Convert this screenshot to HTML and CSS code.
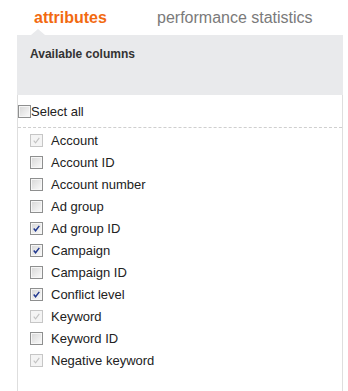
FILE: index.html
```html
<!DOCTYPE html>
<html lang="en">
<head>
  <meta charset="UTF-8" />
  <title>Columns</title>
  <link rel="stylesheet" href="styles.css">
</head>
<body>
  <div class="tabs">
    <span class="tab active">attributes</span>
    <span class="tab">performance statistics</span>
  </div>
  <div class="panel">
    <div class="panel-head">Available columns</div>
    <div class="panel-body">
      <label class="select-all"><span class="cb"></span>Select all</label>
      <ul class="col-list">
        <li><span class="cb checked disabled"><svg viewBox="0 0 13 13"><path d="M3.2 6.6 L5.4 9.2 L9.8 3.4"/></svg></span>Account</li>
        <li><span class="cb"></span>Account ID</li>
        <li><span class="cb"></span>Account number</li>
        <li><span class="cb"></span>Ad group</li>
        <li><span class="cb checked"><svg viewBox="0 0 13 13"><path d="M3.2 6.6 L5.4 9.2 L9.8 3.4"/></svg></span>Ad group ID</li>
        <li><span class="cb checked"><svg viewBox="0 0 13 13"><path d="M3.2 6.6 L5.4 9.2 L9.8 3.4"/></svg></span>Campaign</li>
        <li><span class="cb"></span>Campaign ID</li>
        <li><span class="cb checked"><svg viewBox="0 0 13 13"><path d="M3.2 6.6 L5.4 9.2 L9.8 3.4"/></svg></span>Conflict level</li>
        <li><span class="cb checked disabled"><svg viewBox="0 0 13 13"><path d="M3.2 6.6 L5.4 9.2 L9.8 3.4"/></svg></span>Keyword</li>
        <li><span class="cb"></span>Keyword ID</li>
        <li><span class="cb checked disabled"><svg viewBox="0 0 13 13"><path d="M3.2 6.6 L5.4 9.2 L9.8 3.4"/></svg></span>Negative keyword</li>
      </ul>
    </div>
  </div>
</body>
</html>
```

FILE: styles.css
```css
html, body {
  box-sizing: border-box;
}
body {
  margin: 0;
  background: #fff;
  font-family: 'Liberation Sans', Arial, sans-serif;
  color: #222;
  overflow: hidden;
}
/* Tabs */
.tabs {
  display: flex;
  height: 35px;
  padding-left: 34px;
  line-height: 35px;
  font-size: 16px;
  white-space: nowrap;
}
.tab {
  color: #7a7a7a;
  flex-shrink: 0;
}
.tab.active {
  color: #f26a10;
  font-weight: 700;
  width: 123px;
}
/* Panel */
.panel {
  margin-left: 17px;
  width: 326px;
}
.panel-head {
  position: relative;
  height: 60px;
  box-sizing: border-box;
  padding: 12px 13px 0 13px;
  background: #e9eaec;
  font-size: 12px;
  line-height: 14px;
  font-weight: 700;
  color: #333;
}
.panel-head::before {
  content: '';
  position: absolute;
  left: 14px;
  top: -6px;
  border-left: 7px solid transparent;
  border-right: 7px solid transparent;
  border-bottom: 6px solid #e9eaec;
}
.panel-body {
  border-left: 1px solid #dedede;
  border-right: 1px solid #dedede;
  min-height: 300px;
}
.select-all {
  display: flex;
  align-items: center;
  height: 32px;
  border-bottom: 1px dashed #cfcfcf;
  font-size: 13px;
}
.col-list {
  list-style: none;
  margin: 0;
  padding: 1px 0 0 12px;
}
.col-list li {
  display: flex;
  align-items: center;
  height: 22px;
  font-size: 13px;
}
.col-list .cb {
  margin-right: 8px;
}
/* Checkboxes */
.cb {
  display: inline-block;
  width: 13px;
  height: 13px;
  box-sizing: border-box;
  border: 1px solid #8e8f8f;
  background: linear-gradient(135deg, #d6d6d6 0%, #f0f0f0 70%, #fbfbfb 100%);
  box-shadow: inset 0 0 0 1px #f6f6f6;
  flex-shrink: 0;
}
.cb svg {
  display: block;
  width: 11px;
  height: 11px;
}
.cb svg path {
  fill: none;
  stroke: #21388f;
  stroke-width: 1.7;
}
.cb.disabled {
  border-color: #c6c6c6;
  background: #f4f4f4;
  box-shadow: none;
}
.cb.disabled svg path {
  stroke: #c2c2c2;
  stroke-width: 1.3;
}
```
